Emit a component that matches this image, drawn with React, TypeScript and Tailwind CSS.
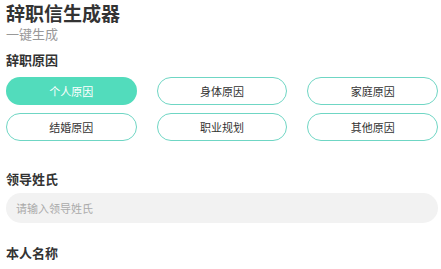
import { useState } from "react";

const reasons = ["个人原因", "身体原因", "家庭原因", "结婚原因", "职业规划", "其他原因"];

export default function App() {
  const [reason, setReason] = useState("个人原因");
  const [leader, setLeader] = useState("");

  return (
    <div
      className="min-h-screen bg-white pl-[6px] pr-[3px] text-[#333]"
      style={{ fontFamily: '"Noto Sans CJK SC", "Noto Sans", sans-serif' }}
    >
      <h1 className="text-[19px] font-bold leading-[25px] text-[#333]">辞职信生成器</h1>
      <p className="text-[13px] leading-[17px] text-[#999]">一键生成</p>

      <h2 className="mt-[9px] text-[13px] font-bold leading-[18px]">辞职原因</h2>
      <div className="mt-[8px] grid grid-cols-3 gap-x-[20px] gap-y-[8px]">
        {reasons.map((r) => {
          const active = r === reason;
          return (
            <button
              key={r}
              type="button"
              onClick={() => setReason(r)}
              className={`h-[28px] rounded-full text-[11px] leading-none ${
                active
                  ? "bg-[#52dcbc] text-white"
                  : "border border-[#6fd6c4] bg-white text-[#333]"
              }`}
            >
              {r}
            </button>
          );
        })}
      </div>

      <h2 className="mt-[29px] text-[13px] font-bold leading-[18px]">领导姓氏</h2>
      <input
        value={leader}
        onChange={(e) => setLeader(e.target.value)}
        placeholder="请输入领导姓氏"
        className="mt-[5px] block h-[30px] w-full rounded-full bg-[#f2f2f2] px-[10px] text-[11px] outline-none placeholder:text-[#aaa]"
      />

      <h2 className="mt-[21px] text-[13px] font-bold leading-[18px]">本人名称</h2>
    </div>
  );
}
